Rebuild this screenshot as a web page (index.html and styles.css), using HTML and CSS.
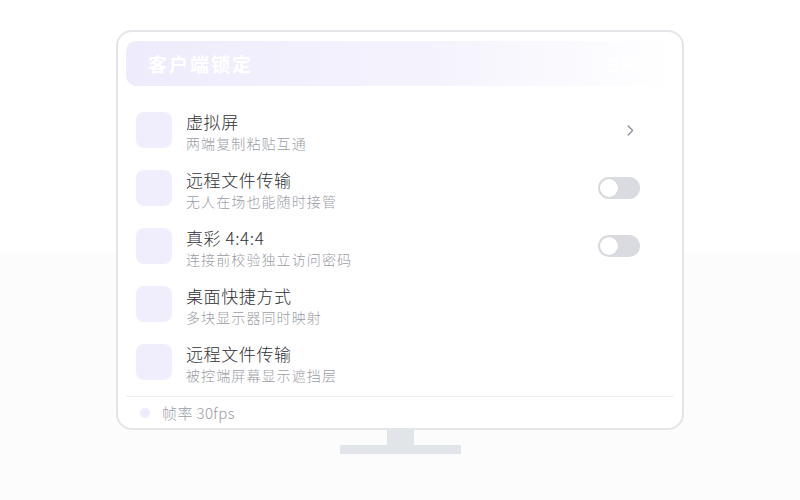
FILE: index.html
```html
<!DOCTYPE html>
<html lang="zh-CN">
<head>
<meta charset="utf-8">
<title>客户端锁定</title>
<link rel="stylesheet" href="styles.css">
</head>
<body>
<div class="scene">
  <div class="monitor">
    <div class="header">
      <span class="header-title">客户端锁定</span>
      <span class="header-extra">已开启</span>
    </div>
    <ul class="list">
      <li class="row">
        <span class="icon"></span>
        <div class="text"><div class="title">虚拟屏</div><div class="sub">两端复制粘贴互通</div></div>
        <svg class="chevron" width="7" height="11" viewBox="0 0 7 11"><path d="M1.2 1 L5.6 5.5 L1.2 10" fill="none" stroke="#8b909c" stroke-width="1.3" stroke-linecap="round" stroke-linejoin="round"/></svg>
      </li>
      <li class="row">
        <span class="icon"></span>
        <div class="text"><div class="title">远程文件传输</div><div class="sub">无人在场也能随时接管</div></div>
        <span class="toggle"><span class="knob"></span></span>
      </li>
      <li class="row">
        <span class="icon"></span>
        <div class="text"><div class="title">真彩 4:4:4</div><div class="sub">连接前校验独立访问密码</div></div>
        <span class="toggle"><span class="knob"></span></span>
      </li>
      <li class="row">
        <span class="icon"></span>
        <div class="text"><div class="title">桌面快捷方式</div><div class="sub">多块显示器同时映射</div></div>
      </li>
      <li class="row">
        <span class="icon"></span>
        <div class="text"><div class="title">远程文件传输</div><div class="sub">被控端屏幕显示遮挡层</div></div>
      </li>
    </ul>
    <div class="footer">
      <span class="dot"></span>
      <span class="fps">帧率 30fps</span>
    </div>
  </div>
  <div class="neck"></div>
  <div class="base"></div>
</div>
</body>
</html>
```
FILE: styles.css
```css
* { box-sizing: border-box; }
html, body { margin: 0; padding: 0; }
body {
  width: 800px;
  height: 500px;
  background: linear-gradient(#ffffff 0, #ffffff 252px, #fcfcfd 253px, #fcfcfd 100%);
  font-family: "Noto Sans CJK SC", "Noto Sans", sans-serif;
  overflow: hidden;
}
.scene {
  display: flex;
  flex-direction: column;
  align-items: center;
  padding-top: 30px;
}
.monitor {
  width: 568px;
  height: 400px;
  border: 2px solid #e3e5e9;
  border-radius: 16px;
  background: #fff;
  padding: 9px 8px 0;
  display: flex;
  flex-direction: column;
}
.header {
  height: 45px;
  border-radius: 10px;
  background: linear-gradient(90deg, #eeecfc 0%, #f4f3fd 55%, #ffffff 100%);
  display: flex;
  align-items: center;
  justify-content: space-between;
  padding: 0 26px 0 22px;
}
.header-title {
  color: #ffffff;
  font-size: 19px;
  font-weight: 700;
  letter-spacing: 2px;
}
.header-extra {
  color: #ffffff;
  font-size: 14px;
  font-weight: 700;
}
.list {
  list-style: none;
  margin: 15px 0 0;
  padding: 0;
}
.row {
  height: 58px;
  display: flex;
  align-items: center;
  padding: 0 34px 0 10px;
}
.icon {
  width: 36px;
  height: 36px;
  border-radius: 8px;
  background: #f0eefc;
  flex: none;
}
.text {
  flex: 1;
  margin-left: 14px;
  margin-top: 3px;
}
.title {
  font-size: 17px;
  line-height: 20px;
  font-weight: 300;
  letter-spacing: 0.6px;
  color: #2f2f33;
}
.sub {
  font-size: 14px;
  line-height: 18px;
  margin-top: 2px;
  font-weight: 300;
  color: #9a9da5;
  letter-spacing: 1.1px;
}
.chevron {
  margin-right: 6px;
  flex: none;
}
.toggle {
  width: 42px;
  height: 22px;
  border-radius: 11px;
  background: #d9dbe0;
  flex: none;
  display: flex;
  align-items: center;
  padding-left: 2px;
}
.knob {
  width: 18px;
  height: 18px;
  border-radius: 50%;
  background: #fff;
  box-shadow: 0 0 0 0.5px #cfd2d8;
}
.footer {
  margin-top: 5px;
  border-top: 1px solid #eceef2;
  height: 32px;
  display: flex;
  align-items: center;
  padding-left: 14px;
}
.dot {
  width: 10px;
  height: 10px;
  border-radius: 50%;
  background: #eeebfc;
  margin-right: 12px;
}
.fps {
  font-size: 15px;
  font-weight: 300;
  letter-spacing: 0.4px;
  color: #9a9da5;
}
.neck {
  width: 27px;
  height: 15px;
  background: #e1e4e8;
}
.base {
  width: 121px;
  height: 9px;
  background: #e1e4e8;
}
```
